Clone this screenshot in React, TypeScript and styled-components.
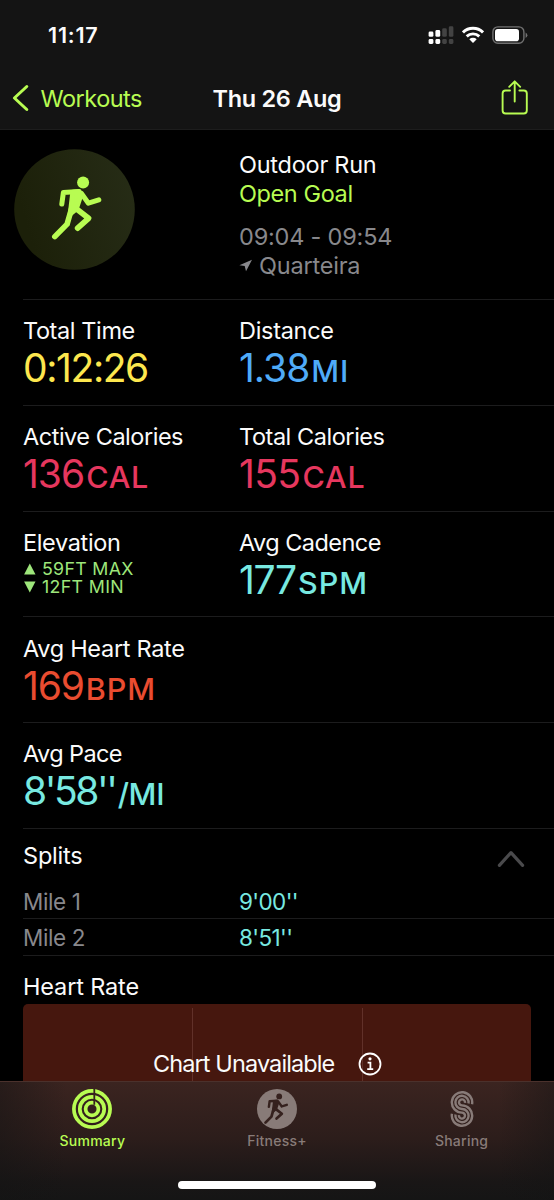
import React from "react";
import styled, { createGlobalStyle } from "styled-components";

const GlobalStyle = createGlobalStyle`
  * {
    box-sizing: border-box;
  }
  body {
    margin: 0;
    background: #000;
    font-family: Inter, "Liberation Sans", sans-serif;
    overflow: hidden;
  }
`;

const LIME = "#b8fc52";
const TEAL = "#78e9e1";
const GREY = "#88888c";

const Screen = styled.div`
  display: flex;
  flex-direction: column;
  width: 554px;
  height: 1200px;
  background: #000;
  color: #fbfbfb;
  overflow: hidden;
`;

const Header = styled.header`
  flex: none;
  height: 130px;
  background: #141414;
  border-bottom: 1px solid #1d1d1d;
`;

const StatusBar = styled.div`
  display: flex;
  justify-content: space-between;
  height: 71px;
  padding: 24px 26px 0 48px;
`;

const Clock = styled.span`
  font-weight: 600;
  font-size: 21.5px;
  line-height: 23px;
  letter-spacing: 0.8px;
`;

const StatusIcons = styled.div`
  display: flex;
  gap: 8px;
  padding-top: 2px;
`;

const NavBar = styled.nav`
  display: grid;
  grid-template-columns: 1fr auto 1fr;
  align-items: center;
  height: 54px;
  padding: 0 25px 0 12px;
`;

const BackLink = styled.a`
  display: flex;
  align-items: center;
  gap: 11.5px;
  color: ${LIME};
  font-size: 23.5px;
  letter-spacing: -0.5px;
`;

const NavTitle = styled.h1`
  margin: 0 0 0 13px;
  font-weight: 600;
  font-size: 23.5px;
  letter-spacing: -0.32px;
`;

const ShareButton = styled.a`
  justify-self: end;
  height: 36px;
`;

const Content = styled.main`
  flex: 1;
  min-height: 0;
  overflow: hidden;
`;

const Hero = styled.section`
  display: grid;
  grid-template-columns: 225px 1fr;
  height: 169px;
  padding: 19px 0 0 14px;
`;

const HeroText = styled.div`
  display: flex;
  flex-direction: column;
  padding-top: 0.7px;
`;

const HeroLine = styled.span<{ $color?: string; $tracking: number }>`
  display: flex;
  align-items: center;
  gap: 6px;
  color: ${(p) => p.$color || "inherit"};
  font-size: 23.5px;
  line-height: 29.3px;
  letter-spacing: ${(p) => p.$tracking}px;
  &:nth-child(3) {
    margin-top: 13.5px;
  }
`;

const StatRow = styled.section`
  display: grid;
  grid-template-columns: 216px 1fr;
  height: 105.8px;
  margin-left: 23px;
  padding-top: 16.2px;
  border-top: 1px solid #1c1c1d;
`;

const Label = styled.div<{ $tracking: number }>`
  font-size: 23.5px;
  line-height: 30px;
  letter-spacing: ${(p) => p.$tracking}px;
`;

const Value = styled.div<{ $color: string; $tracking: number }>`
  color: ${(p) => p.$color};
  font-size: 39px;
  line-height: 43px;
  letter-spacing: ${(p) => p.$tracking}px;
`;

const Unit = styled.span<{ $tracking: number }>`
  margin-left: 2px;
  font-weight: 450;
  font-size: 30.5px;
  line-height: 1;
  letter-spacing: ${(p) => p.$tracking}px;
`;

const Elevation = styled.div`
  padding-top: 2px;
  color: #9ee67b;
`;

const ElevationLine = styled.div<{ $tracking: number }>`
  display: flex;
  align-items: center;
  gap: 6px;
  font-size: 17.8px;
  line-height: 18.4px;
  letter-spacing: ${(p) => p.$tracking}px;
`;

const SplitsHeader = styled.div`
  display: flex;
  justify-content: space-between;
  height: 55px;
  margin-left: 23px;
  padding: 12px 29px 0 0;
  border-top: 1px solid #1c1c1d;
`;

const Chevron = styled.svg`
  margin-top: 9px;
`;

const SplitRow = styled.div`
  display: grid;
  grid-template-columns: 216px 1fr;
  height: 36.4px;
  margin-left: 23px;
  border-bottom: 1px solid #1c1c1d;
  color: ${GREY};
  font-size: 22.5px;
  line-height: 37px;
  letter-spacing: -0.4px;
`;

const SplitTime = styled.span`
  color: ${TEAL};
  letter-spacing: -0.6px;
`;

const HeartRate = styled.section`
  padding: 16.2px 23px 0;
`;

const Chart = styled.div`
  position: relative;
  display: grid;
  grid-template-columns: repeat(3, 1fr);
  height: 170px;
  margin-top: 2.3px;
  padding-top: 4px;
  border-radius: 5px;
  background: #46170e;
`;

const ChartCell = styled.div`
  & + & {
    border-left: 1px solid #613129;
  }
`;

// sits over the chart's grid lines
const ChartMessage = styled.div`
  position: absolute;
  top: 48px;
  left: 130px;
  display: flex;
  align-items: center;
  gap: 24px;
  font-size: 23.5px;
  line-height: 24px;
  letter-spacing: -0.9px;
`;

const TabBar = styled.footer`
  flex: none;
  display: flex;
  flex-direction: column;
  align-items: center;
  height: 119px;
  border-top: 1px solid #4b312c;
  background:
    linear-gradient(90deg, rgba(20, 20, 20, 0.5), transparent 12%, transparent 90%, rgba(20, 20, 20, 0.45)),
    linear-gradient(#3b2420, #2c1d1b 48%, #191616 85%, #151515);
`;

const Tabs = styled.div`
  display: grid;
  grid-template-columns: repeat(3, 184.6px);
  height: 99px;
  padding-top: 7px;
`;

const Tab = styled.a<{ $active?: boolean }>`
  display: flex;
  flex-direction: column;
  align-items: center;
  gap: 2px;
  color: ${(p) => (p.$active ? LIME : "#887b78")};
  font-weight: 500;
  font-size: 14px;
  line-height: 20px;
  letter-spacing: 0.25px;
`;

const HomeIndicator = styled.div`
  width: 198px;
  height: 8px;
  border-radius: 4px;
  background: #fff;
`;

const Runner = () => (
  <g stroke="currentColor" fill="none" strokeLinecap="round" strokeLinejoin="round">
    <circle cx="83.3" cy="42.8" r="6" fill="currentColor" stroke="none" />
    <path d="M62 64.3 63.6 52.6 79 51.8" strokeWidth="5" />
    <path d="M81.5 53.5 88.6 63.4 99 60" strokeWidth="5" />
    <path d="M73 52.5 79.5 52 80.5 57 76.5 69 70.5 74Z" strokeWidth="5" fill="currentColor" />
    <path d="M76.5 69 88.8 78.5 77.8 88.4" strokeWidth="5.6" />
    <path d="M72 68 67.3 84.3 55 96.8" strokeWidth="5.6" />
  </g>
);

const RunBadge = () => (
  <svg width="121" height="121" viewBox="14.2 9.2 121 121" color={LIME}>
    <defs>
      <linearGradient id="badge" x1="0" y1="0.3" x2="1" y2="0">
        <stop offset="0" stopColor="#1c2009" />
        <stop offset="1" stopColor="#272d17" />
      </linearGradient>
    </defs>
    <circle cx="74.7" cy="69.7" r="60.3" fill="url(#badge)" />
    <Runner />
  </svg>
);

const SignalIcon = () => (
  <svg width="26" height="19" viewBox="-0.6 0 26 19">
    <g fill="#fff">
      <rect x="0" y="5.5" width="4.8" height="5.3" rx="1.4" />
      <rect x="6.8" y="4" width="4.8" height="6.8" rx="1.4" />
      <rect x="0" y="13" width="4.8" height="5" rx="1.4" />
      <rect x="6.8" y="13" width="4.8" height="5" rx="1.4" />
    </g>
    <g fill="#434343">
      <rect x="13.6" y="2.3" width="4.6" height="8.5" rx="1.4" />
      <rect x="20.2" y="0.3" width="4.6" height="10.5" rx="1.4" />
      <rect x="13.6" y="13" width="4.6" height="5" rx="1.4" />
      <rect x="20.2" y="13" width="4.6" height="5" rx="1.4" />
    </g>
  </svg>
);

const WifiIcon = () => (
  <svg width="22" height="18" viewBox="0 0 22 18">
    <g fill="none" stroke="#fff" strokeWidth="2.9">
      <path d="M1 6.4a14.3 14.3 0 0 1 20 0" />
      <path d="M4.7 10.4a9 9 0 0 1 12.6 0" />
    </g>
    <path d="M11 17 7.3 13.2a5.4 5.4 0 0 1 7.4 0Z" fill="#fff" />
  </svg>
);

const BatteryIcon = () => (
  <svg width="36" height="19" viewBox="0 0 36 19">
    <rect x="0.9" y="0.9" width="31" height="16.4" rx="5" fill="none" stroke="#707070" strokeWidth="1.4" />
    <rect x="3" y="3" width="24" height="12.2" rx="2.8" fill="#fff" />
    <path d="M33.6 6.4q1.8 1 1.8 2.8t-1.8 2.8Z" fill="#707070" />
  </svg>
);

const ShareIcon = () => (
  <svg width="28" height="36" viewBox="0 0.5 28 36" fill="none" stroke={LIME} strokeWidth="1.9" strokeLinecap="round" strokeLinejoin="round">
    <path d="M9 11H4.6a3 3 0 0 0-3 3v17a3 3 0 0 0 3 3h18.2a3 3 0 0 0 3-3V14a3 3 0 0 0-3-3h-4.4" />
    <path d="M13.7 22V2M8.2 7.3 13.7 1.8l5.5 5.5" />
  </svg>
);

const RingsIcon = () => (
  <svg width="40" height="40" viewBox="0 0 40 40" fill="none" stroke={LIME} strokeWidth="3.7">
    <circle cx="20" cy="20" r="18.1" />
    <circle cx="20" cy="20" r="12.2" />
    <circle cx="20" cy="20" r="6.4" />
    <path d="M22.3 0v15.8" stroke="#35211e" strokeWidth="1.8" />
  </svg>
);

const FitnessIcon = () => (
  <svg width="40" height="40" viewBox="0 0 40 40" color="#35211e">
    <circle cx="20" cy="20" r="20" fill="#887b78" />
    <g transform="translate(-18.2 -13.3) scale(.485)">
      <Runner />
    </g>
  </svg>
);

const SharingIcon = () => (
  <svg width="24" height="40" viewBox="0 -2 24 40" fill="none" stroke="#887b78" strokeWidth="2.4">
    <path d="M22.05 13.2A10.2 10.2 0 1 0 12 21.6A3 3 0 1 1 9 24.1" />
    <path d="M18.5 12.5A6.6 6.6 0 1 0 12 18A6.6 6.6 0 1 1 5.5 23.5" />
    <path d="M15 11.9A3 3 0 1 0 12 14.4A10.2 10.2 0 1 1 1.95 22.8" />
  </svg>
);

interface StatProps {
  label: string;
  labelTracking?: number;
  value: string;
  tracking: number;
  unit?: string;
  unitTracking?: number;
  color: string;
}

const Stat = ({ label, labelTracking = -0.4, value, tracking, unit, unitTracking = 0, color }: StatProps) => (
  <div>
    <Label $tracking={labelTracking}>{label}</Label>
    <Value $color={color} $tracking={tracking}>
      {value}
      {unit && <Unit $tracking={unitTracking}>{unit}</Unit>}
    </Value>
  </div>
);

const splits = [
  { name: "Mile 1", time: "9'00''" },
  { name: "Mile 2", time: "8'51''" },
];

function App() {
  return (
    <>
      <GlobalStyle />
      <Screen>
        <Header>
          <StatusBar>
            <Clock>11:17</Clock>
            <StatusIcons>
              <SignalIcon />
              <WifiIcon />
              <BatteryIcon />
            </StatusIcons>
          </StatusBar>
          <NavBar>
            <BackLink>
              <svg width="17" height="28" viewBox="0 0 17 28" fill="none" stroke={LIME} strokeWidth="3" strokeLinecap="round" strokeLinejoin="round">
                <path d="M14.8 2.5 2.4 14l12.4 11.5" />
              </svg>
              Workouts
            </BackLink>
            <NavTitle>Thu 26 Aug</NavTitle>
            <ShareButton>
              <ShareIcon />
            </ShareButton>
          </NavBar>
        </Header>

        <Content>
          <Hero>
            <RunBadge />
            <HeroText>
              <HeroLine $tracking={-0.25}>Outdoor Run</HeroLine>
              <HeroLine $color={LIME} $tracking={-0.4}>Open Goal</HeroLine>
              <HeroLine $color={GREY} $tracking={-0.2}>09:04 - 09:54</HeroLine>
              <HeroLine $color={GREY} $tracking={-0.2}>
                <svg width="14" height="13" viewBox="0 0 14 13">
                  <path d="M13 .8 7 12.2 5.7 6.9.4 6.2Z" fill={GREY} />
                </svg>
                Quarteira
              </HeroLine>
            </HeroText>
          </Hero>

          <StatRow>
            <Stat label="Total Time" value="0:12:26" tracking={-1.4} color="#fde74e" />
            <Stat label="Distance" labelTracking={-0.3} value="1.38" tracking={-1} unit="MI" unitTracking={1} color="#4fabf8" />
          </StatRow>
          <StatRow>
            <Stat label="Active Calories" labelTracking={-0.48} value="136" tracking={-1} unit="CAL" unitTracking={0.8} color="#e6375e" />
            <Stat label="Total Calories" labelTracking={-0.45} value="155" tracking={-0.6} unit="CAL" unitTracking={0.8} color="#e6375e" />
          </StatRow>
          <StatRow>
            <div>
              <Label $tracking={-0.35}>Elevation</Label>
              <Elevation>
                <ElevationLine $tracking={0.3}>
                  <svg width="13" height="12" viewBox="0 0 13 12">
                    <path d="M6.8.6 12.5 11.6H1.1Z" fill="currentColor" />
                  </svg>
                  59FT MAX
                </ElevationLine>
                <ElevationLine $tracking={0.35}>
                  <svg width="13" height="12" viewBox="0 0 13 12">
                    <path d="M1.1.4H12.5L6.8 11.4Z" fill="currentColor" />
                  </svg>
                  12FT MIN
                </ElevationLine>
              </Elevation>
            </div>
            <Stat label="Avg Cadence" labelTracking={-0.55} value="177" tracking={-1.3} unit="SPM" unitTracking={1.1} color={TEAL} />
          </StatRow>
          <StatRow>
            <Stat label="Avg Heart Rate" labelTracking={-0.3} value="169" tracking={-1.2} unit="BPM" unitTracking={1} color="#ea4c30" />
          </StatRow>
          <StatRow>
            <Stat label="Avg Pace" labelTracking={-0.6} value="8'58''" tracking={-2.4} unit="/MI" unitTracking={-0.3} color={TEAL} />
          </StatRow>

          <SplitsHeader>
            <Label $tracking={-0.2}>Splits</Label>
            <Chevron width="28" height="18" viewBox="0 0 28 18" fill="none" stroke="#4a4a4c" strokeWidth="3.2" strokeLinecap="round" strokeLinejoin="round">
              <path d="M2.4 15.3 14 2.6l11.6 12.7" />
            </Chevron>
          </SplitsHeader>
          {splits.map((split) => (
            <SplitRow key={split.name}>
              <span>{split.name}</span>
              <SplitTime>{split.time}</SplitTime>
            </SplitRow>
          ))}

          <HeartRate>
            <Label $tracking={-0.15}>Heart Rate</Label>
            <Chart>
              <ChartCell />
              <ChartCell />
              <ChartCell />
              <ChartMessage>
                Chart Unavailable
                <svg width="24" height="24" viewBox="0 0 24 24" fill="none" stroke="#fff" strokeWidth="1.8">
                  <circle cx="12" cy="12" r="10.5" />
                  <circle cx="12" cy="6.8" r="1.6" fill="#fff" stroke="none" />
                  <path d="M9.6 10.6h2.8v6M9.2 17.2h6" />
                </svg>
              </ChartMessage>
            </Chart>
          </HeartRate>
        </Content>

        <TabBar>
          <Tabs>
            <Tab $active>
              <RingsIcon />
              <span>Summary</span>
            </Tab>
            <Tab>
              <FitnessIcon />
              <span>Fitness+</span>
            </Tab>
            <Tab>
              <SharingIcon />
              <span>Sharing</span>
            </Tab>
          </Tabs>
          <HomeIndicator />
        </TabBar>
      </Screen>
    </>
  );
}

export default App;
